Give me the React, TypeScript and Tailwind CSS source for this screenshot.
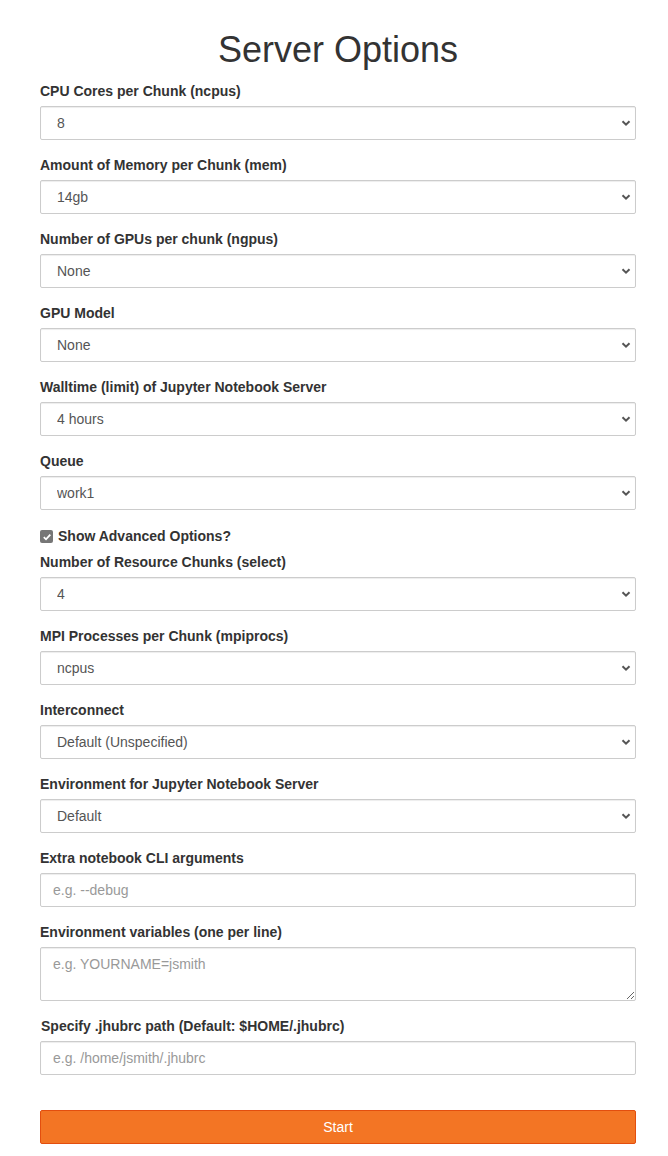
import React from 'react'

const selects: { label: string; value: string }[] = [
  { label: 'CPU Cores per Chunk (ncpus)', value: '8' },
  { label: 'Amount of Memory per Chunk (mem)', value: '14gb' },
  { label: 'Number of GPUs per chunk (ngpus)', value: 'None' },
  { label: 'GPU Model', value: 'None' },
  { label: 'Walltime (limit) of Jupyter Notebook Server', value: '4 hours' },
  { label: 'Queue', value: 'work1' },
]

const advanced: { label: string; value: string }[] = [
  { label: 'Number of Resource Chunks (select)', value: '4' },
  { label: 'MPI Processes per Chunk (mpiprocs)', value: 'ncpus' },
  { label: 'Interconnect', value: 'Default (Unspecified)' },
  { label: 'Environment for Jupyter Notebook Server', value: 'Default' },
]

const control =
  'block w-full rounded-[2px] border border-[#ccc] bg-white px-3 text-[14px] text-[#555] shadow-[inset_0_1px_1px_rgba(0,0,0,0.075)] outline-none placeholder:text-[#999]'

function Label({ children, className = '' }: { children: React.ReactNode; className?: string }) {
  return <label className={`mb-[5px] block h-5 text-[14px] font-bold leading-5 text-[#333] ${className}`}>{children}</label>
}

function SelectField({ label, value }: { label: string; value: string }) {
  return (
    <div className="mb-[15px]">
      <Label>{label}</Label>
      <div className="relative">
        <select defaultValue={value} className={`${control} h-[34px] appearance-none pl-4`}>
          <option value={value}>{value}</option>
        </select>
        <svg className="pointer-events-none absolute right-[5px] top-[12px] h-[10px] w-[10px] text-[#555]" viewBox="0 0 10 10" fill="none">
          <path d="M1.5 3.2L5 6.7L8.5 3.2" stroke="currentColor" strokeWidth="2" />
        </svg>
      </div>
    </div>
  )
}

export default function App() {
  return (
    <div className="min-h-[1156px] bg-white font-['Liberation_Sans',Arial,sans-serif]">
      <form className="ml-[40px] w-[596px] pt-[30px]">
        <h1 className="mb-[11px] h-[40px] text-center text-[36px] leading-[40px] font-normal text-[#333]">Server Options</h1>

        {selects.map((s) => (
          <SelectField key={s.label} {...s} />
        ))}

        {/* advanced toggle */}
        <div className="mb-[7px] mt-[2px] flex h-5 items-center gap-[5px] pt-[3px]">
          <span className="flex h-[13px] w-[13px] items-center justify-center rounded-[2px] bg-[#767676]">
            <svg viewBox="0 0 10 10" className="h-[10px] w-[10px]" fill="none">
              <path d="M1.8 5.2L4 7.3L8.3 2.6" stroke="white" strokeWidth="1.8" />
            </svg>
          </span>
          <span className="text-[14px] font-bold text-[#333]">Show Advanced Options?</span>
        </div>

        {advanced.map((s) => (
          <SelectField key={s.label} {...s} />
        ))}

        <div className="mb-[15px]">
          <Label>Extra notebook CLI arguments</Label>
          <input className={`${control} h-[34px]`} placeholder="e.g. --debug" />
        </div>

        <div className="mb-[15px]">
          <Label>Environment variables (one per line)</Label>
          <textarea rows={2} className={`${control} h-[54px] py-[6px] leading-5`} placeholder="e.g. YOURNAME=jsmith" />
        </div>

        <div className="mb-[15px]">
          <Label className="pl-px">Specify .jhubrc path (Default: $HOME/.jhubrc)</Label>
          <input className={`${control} h-[34px]`} placeholder="e.g. /home/jsmith/.jhubrc" />
        </div>

        <button
          type="button"
          className="mt-[20px] h-[34px] w-full rounded-[2px] border border-[#e34e0e] bg-[#f37524] text-[14px] text-white"
        >
          Start
        </button>
      </form>
    </div>
  )
}
